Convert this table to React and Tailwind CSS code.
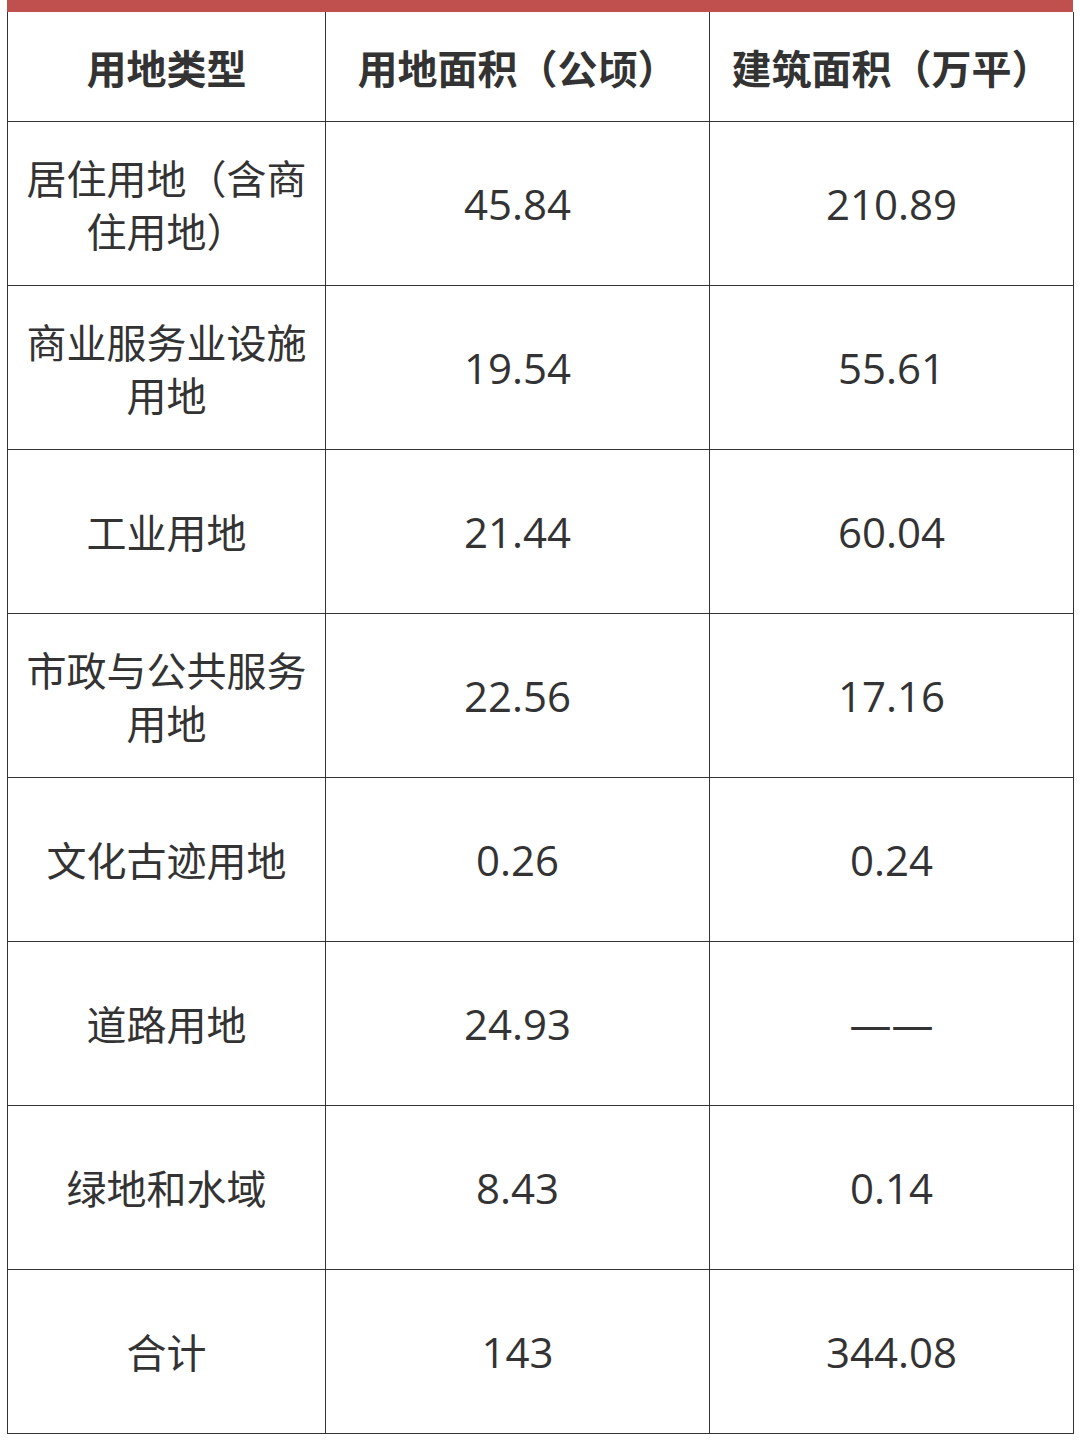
const rows = [
  { type: ["居住用地（含商", "住用地）"], area: "45.84", build: "210.89" },
  { type: ["商业服务业设施", "用地"], area: "19.54", build: "55.61" },
  { type: ["工业用地"], area: "21.44", build: "60.04" },
  { type: ["市政与公共服务", "用地"], area: "22.56", build: "17.16" },
  { type: ["文化古迹用地"], area: "0.26", build: "0.24" },
  { type: ["道路用地"], area: "24.93", build: "——" },
  { type: ["绿地和水域"], area: "8.43", build: "0.14" },
  { type: ["合计"], area: "143", build: "344.08" },
];

const cjk = "font-['Noto_Sans_CJK_SC',sans-serif]";
const num = "font-['Open_Sans','Noto_Sans_CJK_SC',sans-serif]";

export default function App() {
  return (
    <div className="w-[1080px] min-h-[1442px] bg-white pl-[7px] pt-0 text-[#333333]">
      <div className="w-[1066px]">
        <div className="h-[12px] bg-[#c0504d]" />
        <div className="grid grid-cols-[318px_384px_364px] border-l border-[#333333]">
          {/* Header */}
          <div className={`h-[110px] flex items-center justify-center border-r border-b border-[#333333] text-[40px] font-bold ${cjk}`}>
            用地类型
          </div>
          <div className={`h-[110px] flex items-center justify-center border-r border-b border-[#333333] text-[40px] font-bold ${cjk}`}>
            用地面积（公顷）
          </div>
          <div className={`h-[110px] flex items-center justify-center border-r border-b border-[#333333] text-[40px] font-bold ${cjk}`}>
            建筑面积（万平）
          </div>

          {rows.map((r, i) => (
            <div key={i} className="contents">
              <div className={`h-[164px] flex flex-col items-center justify-center border-r border-b border-[#333333] text-[40px] leading-[53px] ${cjk}`}>
                {r.type.map((t, j) => (
                  <span key={j}>{t}</span>
                ))}
              </div>
              <div className={`h-[164px] flex items-center justify-center border-r border-b border-[#333333] text-[42px] ${num}`}>
                {r.area}
              </div>
              <div className={`h-[164px] flex items-center justify-center border-r border-b border-[#333333] text-[42px] ${num}`}>
                {r.build}
              </div>
            </div>
          ))}
        </div>
      </div>
    </div>
  );
}
